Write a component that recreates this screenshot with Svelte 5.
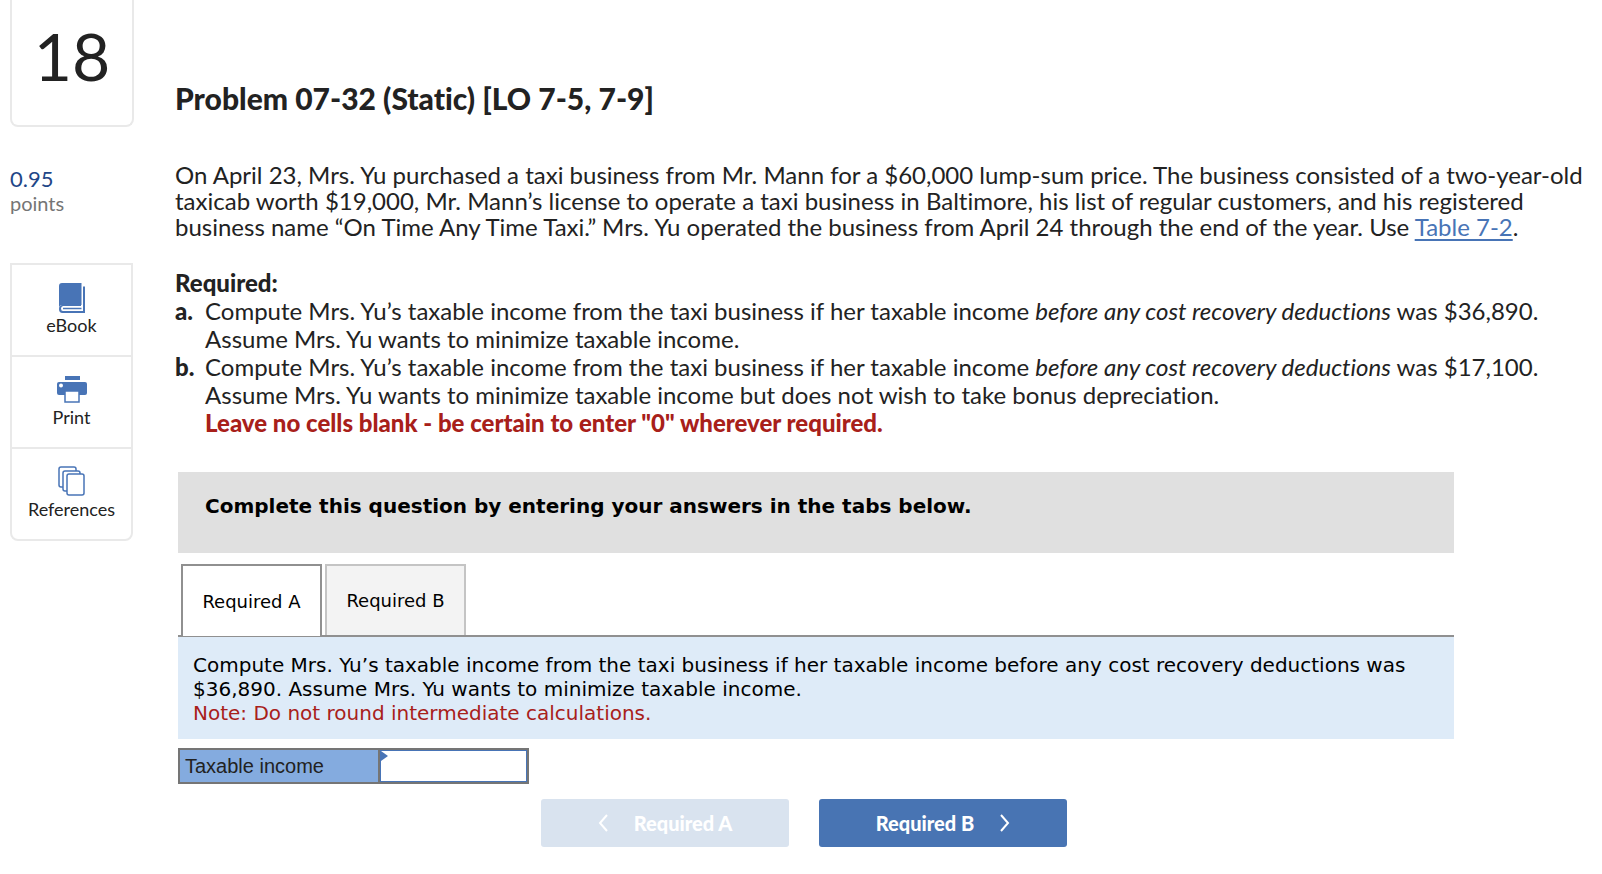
<script>
	let activeTab = $state("A");
	let answers = $state({ A: "", B: "" });

	const tabs = ["A", "B"];
	const questions = {
		A: "Compute Mrs. Yu’s taxable income from the taxi business if her taxable income before any cost recovery deductions was $36,890. Assume Mrs. Yu wants to minimize taxable income.",
		B: "Compute Mrs. Yu’s taxable income from the taxi business if her taxable income before any cost recovery deductions was $17,100. Assume Mrs. Yu wants to minimize taxable income but does not wish to take bonus depreciation.",
	};
</script>

<div class="page">
	<aside class="sidebar">
		<div class="number">18</div>
		<div class="score">
			<span class="score-value">0.95</span>
			<span class="score-unit">points</span>
		</div>
		<nav class="tools">
			<button class="tool" type="button">
				<svg width="30" height="32" viewBox="0 0 30 32">
					<path d="M5 2H24.500V24H5.500Q2 24 2 27V5Q2 2 5 2z" fill="#4874b6" />
					<path d="M26 5.500H28V32H5.500Q2 32 2 28Q2 24 5.500 24H24V25H6Q4 25.500 4 27.500Q4 30 6 30H26z" fill="#4874b6" />
					<path d="M6 27.500H24.500" fill="none" stroke="#4874b6" stroke-width="1.500" />
				</svg>
				<span>eBook</span>
			</button>
			<button class="tool" type="button">
				<svg width="30" height="32" viewBox="0 0 30 32">
					<rect x="8" y="3" width="15" height="4" fill="#4874b6" />
					<rect x="0" y="9" width="30" height="13" rx="2" fill="#4874b6" />
					<circle cx="4" cy="12.500" r="2" fill="#fff" />
					<rect x="8" y="18" width="14" height="11" fill="#fff" stroke="#4874b6" stroke-width="1.500" />
				</svg>
				<span>Print</span>
			</button>
			<button class="tool" type="button">
				<svg width="30" height="32" viewBox="0 0 30 32">
					<g fill="#fff" stroke="#4874b6" stroke-width="1.500">
						<rect x="2" y="2" width="17" height="20" rx="2" />
						<rect x="6" y="6" width="17" height="20" rx="2" />
						<rect x="10" y="9" width="17" height="21" rx="2" />
					</g>
				</svg>
				<span>References</span>
			</button>
		</nav>
	</aside>

	<main class="content">
		<h1>Problem 07-32 (Static) [LO 7-5, 7-9]</h1>

		<p class="intro">
			On April 23, Mrs. Yu purchased a taxi business from Mr. Mann for a $60,000 lump-sum price. The business consisted of a two-year-old
			taxicab worth $19,000, Mr. Mann’s license to operate a taxi business in Baltimore, his list of regular customers, and his registered
			business name “On Time Any Time Taxi.” Mrs. Yu operated the business from April 24 through the end of the year. Use
			<a href="#table-7-2">Table 7-2</a>.
		</p>

		<div class="required">
			<strong>Required:</strong>
			<div class="item">
				<strong>a.</strong>
				<div>
					Compute Mrs. Yu’s taxable income from the taxi business if her taxable income <em>before any cost recovery deductions</em> was $36,890.<br />
					Assume Mrs. Yu wants to minimize taxable income.
				</div>
			</div>
			<div class="item">
				<strong>b.</strong>
				<div>
					Compute Mrs. Yu’s taxable income from the taxi business if her taxable income <em>before any cost recovery deductions</em> was $17,100.<br />
					Assume Mrs. Yu wants to minimize taxable income but does not wish to take bonus depreciation.<br />
					<strong class="warning">Leave no cells blank - be certain to enter "0" wherever required.</strong>
				</div>
			</div>
		</div>

		<section class="worksheet">
			<div class="banner">Complete this question by entering your answers in the tabs below.</div>

			<div class="tabs" role="tablist">
				{#each tabs as tab (tab)}
					<button class="tab" class:active={activeTab === tab} type="button" role="tab" aria-selected={activeTab === tab} onclick={() => (activeTab = tab)}>
						Required {tab}
					</button>
				{/each}
			</div>

			<div class="question">
				{questions[activeTab]}
				<div class="note">Note: Do not round intermediate calculations.</div>
			</div>

			<table class="answer">
				<tbody>
					<tr>
						<th scope="row"><label for="taxable-income">Taxable income</label></th>
						<td><input id="taxable-income" type="text" bind:value={answers[activeTab]} /></td>
					</tr>
				</tbody>
			</table>

			<div class="pager">
				<button class="step" type="button" disabled={activeTab === "A"} onclick={() => (activeTab = "A")}>
					<svg width="10" height="18" viewBox="0 0 10 18"><path d="M9 1L2 9l7 8" fill="none" stroke="currentColor" stroke-width="2" /></svg>
					Required A
				</button>
				<button class="step" type="button" disabled={activeTab === "B"} onclick={() => (activeTab = "B")}>
					Required B
					<svg width="10" height="18" viewBox="0 0 10 18"><path d="M1 1l7 8-7 8" fill="none" stroke="currentColor" stroke-width="2" /></svg>
				</button>
			</div>
		</section>
	</main>
</div>

<style>
	:global(body) {
		margin: 0;
		background: #fff;
	}

	.page {
		display: flex;
		gap: 41px;
		padding: 0 10px;
		color: #222;
		font-family: Lato, "Liberation Sans", sans-serif;
		font-size: 24px;
		font-variant-ligatures: none;
	}

	.page * {
		box-sizing: border-box;
	}

	button {
		margin: 0;
		font-family: inherit;
		cursor: pointer;
	}

	strong {
		font-weight: 900;
	}

	.sidebar {
		flex: none;
		width: 124px;
	}

	.number {
		height: 127px;
		padding-top: 18px;
		border: 2px solid #e9e9e9;
		border-top: 0;
		border-radius: 0 0 8px 8px;
		font-size: 66px;
		line-height: 76px;
		text-align: center;
	}

	.score {
		display: flex;
		flex-direction: column;
		margin: 39px 0 47px;
		line-height: 25px;
	}

	.score-value {
		color: #1f4788;
		font-size: 22px;
	}

	.score-unit {
		color: #757575;
		font-size: 20px;
	}

	.tools {
		display: flex;
		flex-direction: column;
		width: 123px;
		border: 2px solid #e9e9e9;
		border-radius: 0 0 8px 8px;
	}

	.tool {
		display: flex;
		flex-direction: column;
		align-items: center;
		height: 90px;
		padding: 16px 0 0;
		border: 0;
		background: none;
		color: #222;
		font-size: 18px;
		line-height: 24px;
	}

	.tool + .tool {
		height: 92px;
		border-top: 2px solid #e9e9e9;
	}

	.content {
		flex: 1;
		min-width: 0;
	}

	h1 {
		margin: 81px 0 0;
		font-size: 30px;
		font-weight: 900;
		line-height: 34px;
	}

	.intro {
		margin: 47px 0 0;
		line-height: 26px;
	}

	.intro a {
		color: #4874b6;
		text-decoration-thickness: 2px;
		text-underline-offset: 3px;
	}

	.required {
		margin-top: 29px;
		line-height: 28px;
	}

	.item {
		display: grid;
		grid-template-columns: 30px 1fr;
	}

	.warning {
		color: #a8201a;
	}

	.worksheet {
		margin: 35px 138px 0 3px;
		color: #000;
		font-family: Verdana, "DejaVu Sans", sans-serif;
		font-size: 20px;
	}

	.banner {
		height: 81px;
		padding: 22px 27px;
		background: #e0e0e0;
		font-weight: bold;
		line-height: 24px;
	}

	.tabs {
		display: flex;
		gap: 3px;
		margin-top: 11px;
		padding-left: 3px;
		border-bottom: 2px solid #909090;
	}

	.tab {
		width: 141px;
		height: 71px;
		padding: 0;
		border: 2px solid #c4c4c4;
		border-bottom: 0;
		background: #f3f3f3;
		color: #000;
		font-size: 18px;
	}

	.tab.active {
		margin-bottom: -1px;
		height: 72px;
		border-color: #909090;
		background: #fff;
	}

	.question {
		padding: 16px 15px 14px;
		background: #deebf8;
		line-height: 24px;
	}

	.note {
		color: #a8201a;
	}

	.answer {
		margin-top: 9px;
		border-collapse: collapse;
		font-family: Arial, "Liberation Sans", sans-serif;
	}

	.answer th,
	.answer td {
		height: 34px;
		padding: 0;
		border: 2px solid #757575;
	}

	.answer th {
		width: 200px;
		padding: 0 5px;
		background: #84abdf;
		color: #222;
		font-weight: normal;
		text-align: left;
	}

	.answer td {
		position: relative;
		width: 149px;
	}

	/* flag in the corner of an editable cell */
	.answer td::after {
		content: "";
		position: absolute;
		top: 1px;
		left: 1px;
		border-top: 5px solid transparent;
		border-bottom: 5px solid transparent;
		border-left: 7px solid #4874b6;
	}

	.answer input {
		display: block;
		width: 100%;
		height: 32px;
		padding: 0 8px;
		border: 1px solid #4874b6;
		border-radius: 0;
		outline: none;
		background: #fff;
		font: inherit;
		text-align: right;
	}

	.pager {
		display: flex;
		justify-content: center;
		gap: 30px;
		margin-top: 15px;
		padding-right: 24px;
	}

	.step {
		display: flex;
		align-items: center;
		justify-content: center;
		gap: 26px;
		width: 248px;
		height: 48px;
		padding: 0;
		border: 0;
		border-radius: 3px;
		background: #4874b3;
		color: #fff;
		font-family: Lato, "Liberation Sans", sans-serif;
		font-size: 20px;
		font-weight: 900;
	}

	.step:disabled {
		background: #d9e3ef;
		cursor: default;
	}
</style>
